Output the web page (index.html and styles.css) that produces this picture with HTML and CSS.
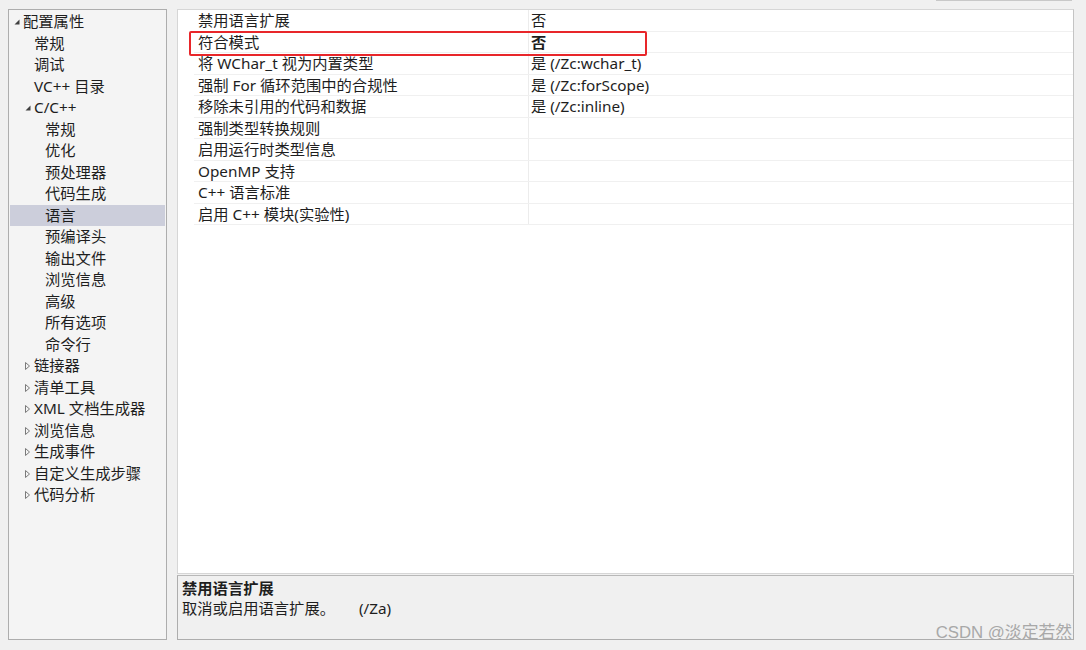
FILE: index.html
```html
<!DOCTYPE html>
<html lang="zh-CN">
<head>
<meta charset="utf-8">
<title>配置属性</title>
<link rel="stylesheet" href="styles.css">
</head>
<body>
<div class="page">
  <div class="topline"></div>
  <div class="main">
    <div class="tree">
      <div class="node l0"><span class="tw"><svg width="6" height="6" viewBox="0 0 6 6"><path d="M5.5 0.5 L5.5 5.5 L0.5 5.5 Z" fill="#404040"/></svg></span>配置属性</div>
      <div class="node l1"><span class="tw"></span>常规</div>
      <div class="node l1"><span class="tw"></span>调试</div>
      <div class="node l1"><span class="tw"></span>VC++ 目录</div>
      <div class="node l1"><span class="tw"><svg width="6" height="6" viewBox="0 0 6 6"><path d="M5.5 0.5 L5.5 5.5 L0.5 5.5 Z" fill="#404040"/></svg></span>C/C++</div>
      <div class="node l2"><span class="tw"></span>常规</div>
      <div class="node l2"><span class="tw"></span>优化</div>
      <div class="node l2"><span class="tw"></span>预处理器</div>
      <div class="node l2"><span class="tw"></span>代码生成</div>
      <div class="node l2 selected"><span class="tw"></span>语言</div>
      <div class="node l2"><span class="tw"></span>预编译头</div>
      <div class="node l2"><span class="tw"></span>输出文件</div>
      <div class="node l2"><span class="tw"></span>浏览信息</div>
      <div class="node l2"><span class="tw"></span>高级</div>
      <div class="node l2"><span class="tw"></span>所有选项</div>
      <div class="node l2"><span class="tw"></span>命令行</div>
      <div class="node l1"><span class="tw"><svg width="5" height="8" viewBox="0 0 5 8"><path d="M0.5 0.5 L4.5 4 L0.5 7.5 Z" fill="none" stroke="#7a7a7a" stroke-width="1"/></svg></span>链接器</div>
      <div class="node l1"><span class="tw"><svg width="5" height="8" viewBox="0 0 5 8"><path d="M0.5 0.5 L4.5 4 L0.5 7.5 Z" fill="none" stroke="#7a7a7a" stroke-width="1"/></svg></span>清单工具</div>
      <div class="node l1"><span class="tw"><svg width="5" height="8" viewBox="0 0 5 8"><path d="M0.5 0.5 L4.5 4 L0.5 7.5 Z" fill="none" stroke="#7a7a7a" stroke-width="1"/></svg></span>XML 文档生成器</div>
      <div class="node l1"><span class="tw"><svg width="5" height="8" viewBox="0 0 5 8"><path d="M0.5 0.5 L4.5 4 L0.5 7.5 Z" fill="none" stroke="#7a7a7a" stroke-width="1"/></svg></span>浏览信息</div>
      <div class="node l1"><span class="tw"><svg width="5" height="8" viewBox="0 0 5 8"><path d="M0.5 0.5 L4.5 4 L0.5 7.5 Z" fill="none" stroke="#7a7a7a" stroke-width="1"/></svg></span>生成事件</div>
      <div class="node l1"><span class="tw"><svg width="5" height="8" viewBox="0 0 5 8"><path d="M0.5 0.5 L4.5 4 L0.5 7.5 Z" fill="none" stroke="#7a7a7a" stroke-width="1"/></svg></span>自定义生成步骤</div>
      <div class="node l1"><span class="tw"><svg width="5" height="8" viewBox="0 0 5 8"><path d="M0.5 0.5 L4.5 4 L0.5 7.5 Z" fill="none" stroke="#7a7a7a" stroke-width="1"/></svg></span>代码分析</div>
    </div>
    <div class="right">
      <div class="grid">
        <div class="prow"><div class="pname">禁用语言扩展</div><div class="pval">否</div></div>
        <div class="prow"><div class="pname">符合模式</div><div class="pval bold">否</div></div>
        <div class="prow"><div class="pname">将 WChar_t 视为内置类型</div><div class="pval">是 (/Zc:wchar_t)</div></div>
        <div class="prow"><div class="pname">强制 For 循环范围中的合规性</div><div class="pval">是 (/Zc:forScope)</div></div>
        <div class="prow"><div class="pname">移除未引用的代码和数据</div><div class="pval">是 (/Zc:inline)</div></div>
        <div class="prow"><div class="pname">强制类型转换规则</div><div class="pval"></div></div>
        <div class="prow"><div class="pname">启用运行时类型信息</div><div class="pval"></div></div>
        <div class="prow"><div class="pname">OpenMP 支持</div><div class="pval"></div></div>
        <div class="prow"><div class="pname">C++ 语言标准</div><div class="pval"></div></div>
        <div class="prow"><div class="pname">启用 C++ 模块(实验性)</div><div class="pval"></div></div>
        <div class="redbox"></div>
      </div>
      <div class="desc">
        <div class="desc-title">禁用语言扩展</div>
        <div class="desc-text">取消或启用语言扩展。<span class="flag">(/Za)</span></div>
      </div>
    </div>
  </div>
  <div class="watermark">CSDN @淡定若然</div>
</div>
</body>
</html>
```

FILE: styles.css
```css
* { box-sizing: border-box; }
html, body { margin: 0; padding: 0; }
body {
  background: #f0f0f0;
  font-family: "Noto Sans", "Noto Sans CJK SC", sans-serif;
  font-size: 15.3px;
  color: #1e1e1e;
}
.page {
  position: relative;
  width: 1086px;
  height: 650px;
  padding: 0 12px 0 8px;
}
.topline {
  height: 1px;
  width: 136px;
  margin-left: auto;
  margin-right: 2px;
  background: #c8c8c8;
}
.main {
  display: flex;
  gap: 10px;
  margin-top: 8px;
  height: 631px;
}
.tree {
  width: 159px;
  border: 1px solid #adadad;
  background: #f4f4f4;
  padding: 1px 1px 0 0;
}
.node {
  display: flex;
  align-items: center;
  height: 21.5px;
  line-height: 21.5px;
  white-space: nowrap;
}
.node.l0 { padding-left: 4px; }
.node.l1 { padding-left: 15px; }
.node.l2 { padding-left: 26px; }
.node.selected { background: #cccedb; margin-left: 1px; padding-left: 25px; }
.tw {
  width: 10px;
  height: 21.5px;
  display: flex;
  align-items: center;
  padding-left: 1px;
  padding-top: 1px;
}
.tw svg { display: block; }
.right {
  flex: 1;
  display: flex;
  flex-direction: column;
  gap: 1px;
}
.grid {
  position: relative;
  flex: 1;
  background: #ffffff;
  border: 1px solid #d6d6d6;
  border-right-color: #c4c4c4;
}
.prow {
  display: flex;
  height: 21.5px;
  margin-left: 16px;
  border-bottom: 1px solid #f0f0f0;
}
.pname {
  width: 334px;
  padding-left: 4px;
  line-height: 21px;
  white-space: nowrap;
}
.pval {
  flex: 1;
  border-left: 1px solid #ececec;
  padding-left: 2px;
  line-height: 21px;
  white-space: nowrap;
}
.pval.bold { font-weight: bold; }
.redbox {
  position: absolute;
  left: 11px;
  top: 21px;
  width: 458px;
  height: 25px;
  border: 2px solid #e8262a;
  border-radius: 2px;
}
.desc {
  height: 65px;
  border: 1px solid #adadad;
  border-top-color: #b8b8b8;
  background: #f0f0f0;
  padding: 3px 4px 0 4px;
  line-height: 19.5px;
}
.desc-title { font-weight: bold; }
.flag { margin-left: 24px; }
.watermark {
  position: absolute;
  right: 14px;
  bottom: 7px;
  font-size: 16.8px;
  color: #a8a8a8;
  font-family: "Liberation Sans", "Noto Sans CJK SC", sans-serif;
}
```
